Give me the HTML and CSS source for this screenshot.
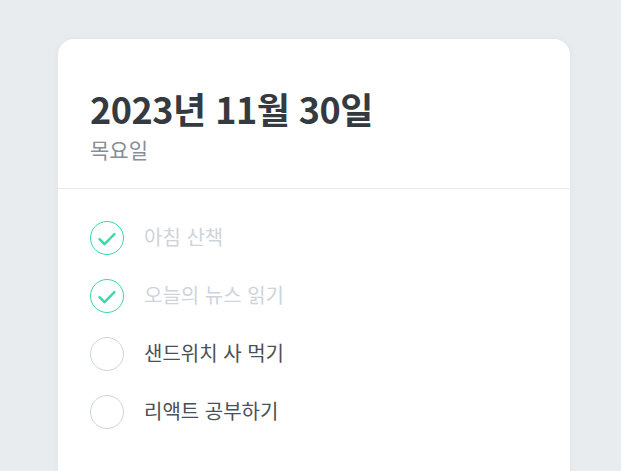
FILE: index.html
```html
<!DOCTYPE html>
<html lang="ko">
<head>
<meta charset="utf-8">
<link rel="stylesheet" href="styles.css">
</head>
<body>
<div class="template">
  <div class="head">
    <h1 class="date">2023년 11월 30일</h1>
    <div class="day">목요일</div>
  </div>
  <div class="list">
    <div class="item done">
      <div class="circle"><svg viewBox="0 0 18 14"><path d="M1.5 7.2l5 5L16.5 2" fill="none" stroke="currentColor" stroke-width="2.4" stroke-linecap="round" stroke-linejoin="round"/></svg></div>
      <div class="text">아침 산책</div>
    </div>
    <div class="item done">
      <div class="circle"><svg viewBox="0 0 18 14"><path d="M1.5 7.2l5 5L16.5 2" fill="none" stroke="currentColor" stroke-width="2.4" stroke-linecap="round" stroke-linejoin="round"/></svg></div>
      <div class="text">오늘의 뉴스 읽기</div>
    </div>
    <div class="item">
      <div class="circle"></div>
      <div class="text">샌드위치 사 먹기</div>
    </div>
    <div class="item">
      <div class="circle"></div>
      <div class="text">리액트 공부하기</div>
    </div>
  </div>
</div>
</body>
</html>
```
FILE: styles.css
```css
html, body {
  margin: 0;
  padding: 0;
  background: #e9ecef;
  font-family: "Noto Sans CJK KR", "Noto Sans", sans-serif;
  overflow: hidden;
}
.template {
  width: 512px;
  height: 768px;
  margin: 39px 0 0 58px;
  background: #fff;
  border-radius: 16px;
  box-shadow: 0 0 8px rgba(0, 0, 0, 0.04);
  display: flex;
  flex-direction: column;
}
.head {
  padding: 48px 32px 24px;
  border-bottom: 1px solid #e9ecef;
}
.date {
  margin: 0;
  font-size: 36px;
  line-height: 43px;
  font-weight: 700;
  color: #343a40;
  letter-spacing: -0.5px;
}
.day {
  margin-top: 4px;
  font-size: 21px;
  line-height: 30px;
  color: #868e96;
}
.list {
  padding: 20px 32px 48px;
}
.item {
  display: flex;
  align-items: center;
  padding: 12px 0;
}
.circle {
  width: 32px;
  height: 32px;
  border-radius: 50%;
  border: 1px solid #ced4da;
  display: flex;
  align-items: center;
  justify-content: center;
  margin-right: 20px;
}
.circle svg {
  width: 18px;
  height: 14px;
  margin-top: 1px;
}
.item.done .circle {
  border-color: #38d9a9;
  color: #38d9a9;
}
.text {
  font-size: 20px;
  line-height: 30px;
  padding-bottom: 3px;
  color: #495057;
}
.item.done .text {
  color: #ced4da;
}
```
